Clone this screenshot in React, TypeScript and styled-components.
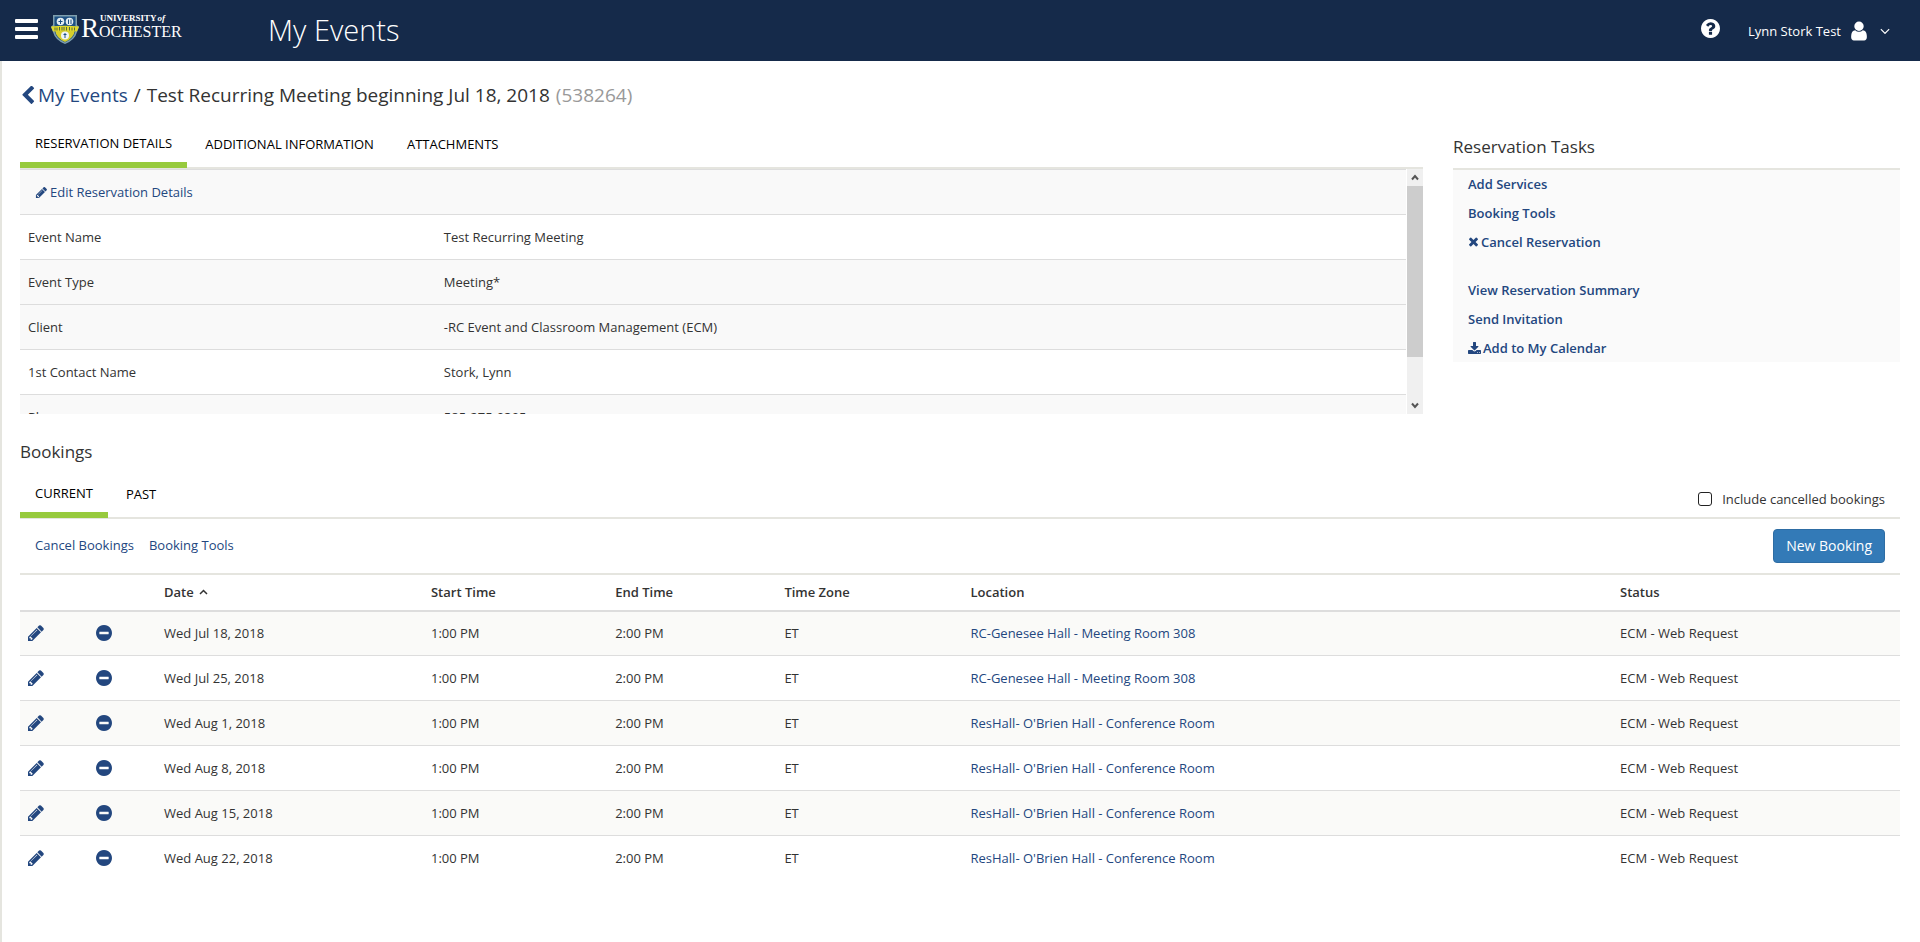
import React, { useRef } from "react";
import styled, { createGlobalStyle } from "styled-components";

const GlobalStyle = createGlobalStyle`
  *, *::before, *::after { box-sizing: border-box; }
  body {
    margin: 0;
    background: #fff;
    color: #333;
    font-family: "Open Sans", "Noto Sans", sans-serif;
    font-size: 13px;
    line-height: 20px;
  }
  button { font-family: inherit; }
`;

const navy = "#152a4a";
const linkBlue = "#23477f";
const rule = "#e5e5df";

const ICONS = {
  chevronLeft:
    "M1427 301l-531 531 531 531q19 19 19 45t-19 45l-166 166q-19 19-45 19t-45-19l-742-742q-19-19-19-45t19-45l742-742q19-19 45-19t45 19l166 166q19 19 19 45t-19 45z",
  question:
    "M1024 1376v-192q0-14-9-23t-23-9h-192q-14 0-23 9t-9 23v192q0 14 9 23t23 9h192q14 0 23-9t9-23zm256-672q0-88-55.5-163t-138.5-116-170-41q-243 0-371 213-15 24 8 42l132 100q7 6 19 6 16 0 25-12 53-68 86-92 34-24 86-24 48 0 85.5 26t37.5 59q0 38-20 61t-68 45q-63 28-115.5 86.5t-52.5 125.5v36q0 14 9 23t23 9h192q14 0 23-9t9-23q0-19 21.5-49.5t54.5-49.5q32-18 49-28.5t46-35 44.5-48 28-60.5 12.5-81zm384 192q0 209-103 385.5t-279.5 279.5-385.5 103-385.5-103-279.5-279.5-103-385.5 103-385.5 279.5-279.5 385.5-103 385.5 103 279.5 279.5 103 385.5z",
  user:
    "M1536 1399q0 109-62.5 187t-150.5 78h-854q-88 0-150.5-78t-62.5-187q0-85 8.5-160.5t31.5-152 58.5-131 94-89 134.5-34.5q131 128 313 128t313-128q76 0 134.5 34.5t94 89 58.5 131 31.5 152 8.5 160.5zm-256-887q0 159-112.5 271.5t-271.5 112.5-271.5-112.5-112.5-271.5 112.5-271.5 271.5-112.5 271.5 112.5 112.5 271.5z",
  angleDown:
    "M1395 736q0 13-10 23l-466 466q-10 10-23 10t-23-10l-466-466q-10-10-10-23t10-23l50-50q10-10 23-10t23 10l393 393 393-393q10-10 23-10t23 10l50 50q10 10 10 23z",
  pencil:
    "M491 1536l91-91-235-235-91 91v107h128v128h107zm523-928q0-22-22-22-10 0-17 7l-542 542q-7 7-7 17 0 22 22 22 10 0 17-7l542-542q7-7 7-17zm-54-192l416 416-832 832h-416v-416zm683 96q0 53-37 90l-166 166-416-416 166-165q36-38 90-38 53 0 91 38l235 234q37 39 37 91z",
  minusCircle:
    "M1344 960v-128q0-26-19-45t-45-19h-768q-26 0-45 19t-19 45v128q0 26 19 45t45 19h768q26 0 45-19t19-45zm320-64q0 209-103 385.5t-279.5 279.5-385.5 103-385.5-103-279.5-279.5-103-385.5 103-385.5 279.5-279.5 385.5-103 385.5 103 279.5 279.5 103 385.5z",
  times:
    "M1490 1322q0 40-28 68l-136 136q-28 28-68 28t-68-28l-294-294-294 294q-28 28-68 28t-68-28l-136-136q-28-28-28-68t28-68l294-294-294-294q-28-28-28-68t28-68l136-136q28-28 68-28t68 28l294 294 294-294q28-28 68-28t68 28l136 136q28 28 28 68t-28 68l-294 294 294 294q28 28 28 68z",
  download:
    "M1344 1344q0-26-19-45t-45-19-45 19-19 45 19 45 45 19 45-19 19-45zm256 0q0-26-19-45t-45-19-45 19-19 45 19 45 45 19 45-19 19-45zm128-224v320q0 40-28 68t-68 28h-1472q-40 0-68-28t-28-68v-320q0-40 28-68t68-28h465l135 136q58 56 136 56t136-56l136-136h464q40 0 68 28t28 68zm-325-569q17 41-14 70l-448 448q-18 19-45 19t-45-19l-448-448q-31-29-14-70 17-39 59-39h256v-448q0-26 19-45t45-19h256q26 0 45 19t19 45v448h256q42 0 59 39z",
};

type IconName = keyof typeof ICONS;

const IconSvg = styled.svg<{ $size: number }>`
  flex: none;
  display: block;
  width: ${(p) => p.$size}px;
  height: ${(p) => p.$size}px;
  fill: currentColor;
`;

const Icon = ({ name, size, box = "0 0 1792 1792" }: { name: IconName; size: number; box?: string }) => (
  <IconSvg $size={size} viewBox={box} aria-hidden="true">
    <path d={ICONS[name]} />
  </IconSvg>
);

/* ---------- Header ---------- */

const Header = styled.header`
  display: flex;
  align-items: center;
  height: 61px;
  padding: 0 27px 0 15px;
  background: ${navy};
  color: #fff;
`;

const Brand = styled.div`
  display: flex;
  align-items: center;
  gap: 13px;
  flex: 0 0 253px;
  height: 61px;
  padding-bottom: 4px;
`;

const MenuButton = styled.button`
  display: flex;
  flex-direction: column;
  gap: 4px;
  width: 23px;
  padding: 0;
  border: 0;
  background: none;
`;

const MenuBar = styled.span`
  height: 4px;
  border-radius: 1px;
  background: #fff;
`;

const HeaderTitle = styled.h1`
  flex: 1;
  margin: 0;
  padding-bottom: 2px;
  font-size: 29px;
  line-height: 40px;
  font-weight: 300;
`;

const IconButton = styled.button`
  padding: 0;
  border: 0;
  background: none;
  color: inherit;
`;

const HelpButton = styled(IconButton)`
  margin: 0 28px 4px 0;
`;

const UserButton = styled(IconButton)`
  display: flex;
  align-items: center;
  gap: 7px;
  font-size: 13px;
  line-height: 20px;
`;

const Logo = () => (
  <svg width="136" height="36" viewBox="0 0 136 36" role="img" aria-label="University of Rochester">
    <g transform="translate(0 4)">
      <path d="M2 0h24v10l2 2-2 5q-2 8-12 12Q4 25 2 17L0 12l2-2z" fill="#7f9fae" />
      <path d="M3.500 1.500h21V16q-1.500 8-10.500 11.500Q5 24 3.500 16z" fill="#1d5083" />
      <path d="M4 15h20q-1 8-10 12Q5 23 4 15z" fill="#d6cf2c" />
      <circle cx="9.500" cy="6.500" r="3.800" fill="#e4edf2" />
      <circle cx="18.500" cy="6.500" r="3.800" fill="#e4edf2" />
      <path d="M7.500 6.500h4M9.500 4.500v4.500M17.500 4.500v4.500M20 4.500v4.500" stroke="#1d5083" />
      <path d="M0 11.500q14-1.500 28 0l-2 5q-12-1.500-24 0z" fill="#e0d92a" />
      <path d="M4 12.500v3M6 12.500v3M8.500 12v3.500M11 12v3.500M13 12v3.500M15.500 12v3.500M18.500 12v3.500M21 12.500v3M23.500 12.500v3" stroke="#55683f" />
      <circle cx="14" cy="20.500" r="4" fill="#eef4f6" />
      <path d="M14 18v5M12.500 19.500h3" stroke="#1d5083" />
    </g>
    <text x="30" y="26" fill="#fff" fontFamily="'Liberation Serif', serif" fontSize="27">
      R<tspan fontSize="16">OCHESTER</tspan>
    </text>
    <text x="49" y="10" fill="#fff" fontFamily="'Liberation Serif', serif" fontSize="9" fontWeight="700">
      UNIVERSITY<tspan fontStyle="italic" dx="1">of</tspan>
    </text>
  </svg>
);

/* ---------- Page ---------- */

const Page = styled.main`
  min-height: calc(100vh - 61px);
  padding: 20px 20px 0 18px;
  border-left: 2px solid ${rule};
`;

const Breadcrumb = styled.h2`
  display: flex;
  align-items: center;
  margin: 0;
  gap: 6px;
  font-size: 19px;
  line-height: 28px;
  font-weight: 400;
`;

const Link = styled.a`
  color: ${linkBlue};
  text-decoration: none;
`;

const BackLink = styled(Link)`
  display: flex;
  align-items: center;
`;

const ReservationId = styled.span`
  color: #999;
`;

const TopRow = styled.div`
  display: grid;
  grid-template-columns: minmax(0, 1403fr) minmax(0, 447fr);
  column-gap: 30px;
  align-items: start;
  margin-top: 15px;
`;

const TabBar = styled.div`
  display: flex;
  align-items: flex-end;
  height: 45px;
  border-bottom: 2px solid ${rule};
`;

const Tab = styled.button<{ $active?: boolean }>`
  height: ${(p) => (p.$active ? 44 : 43)}px;
  margin: ${(p) => (p.$active ? "0 3px -1px 0" : "0 3px 0 0")};
  padding: ${(p) => (p.$active ? "0 15px" : "0 15px 3px")};
  border: 0;
  border-bottom: ${(p) => (p.$active ? "6px solid #97ca3d" : "0")};
  background: none;
  color: #000;
  font-size: 13px;
  line-height: 20px;
  text-transform: uppercase;
`;

const DetailsPane = styled.div`
  display: flex;
  gap: 1px;
  height: 245px;
`;

const DetailsScroll = styled.div`
  flex: 1;
  overflow: hidden;
`;

const EditBar = styled.div`
  height: 45px;
  padding: 12px 15px;
  border-top: 1px solid #ddd;
  background: #f9f9f9;
`;

const EditLink = styled(Link)`
  display: inline-flex;
  align-items: center;
  gap: 2px;
`;

const DetailsTable = styled.table`
  width: 100%;
  border-collapse: collapse;
  table-layout: fixed;
`;

const DetailRow = styled.tr<{ $shaded: boolean }>`
  background: ${(p) => (p.$shaded ? "#f9f9f9" : "#fff")};
`;

const DetailLabel = styled.th`
  width: 30%;
  height: 45px;
  padding: 0 8px;
  border-top: 1px solid #ddd;
  font-weight: 400;
  text-align: left;
`;

const DetailValue = styled.td`
  padding: 0 8px;
  border-top: 1px solid #ddd;
`;

const Scrollbar = styled.div`
  display: flex;
  flex-direction: column;
  width: 16px;
  background: #f0f0f0;
`;

const ScrollArrow = styled.button`
  display: flex;
  align-items: center;
  justify-content: center;
  height: 17px;
  padding: 0;
  border: 0;
  background: none;
  color: #555;
`;

const ScrollTrack = styled.div`
  flex: 1;
`;

const ScrollThumb = styled.div`
  height: 81%;
  background: #cdcdcd;
`;

const Arrow = ({ up }: { up?: boolean }) => (
  <svg width="8" height="7" viewBox="0 0 8 7" fill="none" stroke="currentColor" strokeWidth="2" aria-hidden="true">
    <path d={up ? "M1 5.500L4 2l3 3.500" : "M1 1.500L4 5l3-3.500"} />
  </svg>
);

const SectionTitle = styled.h3`
  margin: 0;
  font-size: 17px;
  line-height: 24px;
  font-weight: 400;
`;

const TasksTitle = styled(SectionTitle)`
  padding: 11px 0 9px;
  border-bottom: 2px solid ${rule};
`;

const TaskList = styled.ul`
  margin: 0;
  padding: 0 15px;
  background: #fafafa;
  list-style: none;
`;

const Task = styled.li<{ $gap?: boolean }>`
  display: flex;
  align-items: flex-start;
  height: 29px;
  margin-top: ${(p) => (p.$gap ? 20 : 0)}px;
  padding-top: 4px;
  &:nth-child(3n) { height: 28px; }
`;

const TaskLink = styled(Link)`
  display: flex;
  align-items: center;
  gap: 2px;
  font-weight: 600;
`;

/* ---------- Bookings ---------- */

const Bookings = styled.section`
  margin-top: 26px;
`;

const BookingTabs = styled.div`
  display: flex;
  align-items: flex-end;
  justify-content: space-between;
  height: 55px;
  border-bottom: 2px solid ${rule};
`;

const TabGroup = styled.div`
  display: flex;
  align-items: flex-end;
`;

const CheckLabel = styled.label`
  display: flex;
  align-items: center;
  gap: 10px;
  padding: 0 15px 8px;
`;

const Checkbox = styled.input`
  appearance: none;
  width: 14px;
  height: 14px;
  margin: 0;
  border: 1px solid #222;
  border-radius: 3px;
  background: #fff;
`;

const ActionBar = styled.div`
  display: flex;
  align-items: center;
  height: 56px;
  padding: 0 15px;
  border-bottom: 2px solid ${rule};
`;

const ActionLinks = styled.nav`
  display: flex;
  gap: 15px;
  padding-bottom: 2px;
`;

const NewBookingButton = styled.button`
  height: 34px;
  margin-left: auto;
  padding: 0 12px;
  border: 1px solid #2e6da4;
  border-radius: 4px;
  background: #337ab7;
  color: #fff;
  font-size: 14px;
  line-height: 20px;
`;

const BookingTable = styled.table`
  width: 100%;
  border-collapse: separate;
  border-spacing: 0;
  table-layout: fixed;
`;

const Col = styled.col<{ $width?: string }>`
  width: ${(p) => p.$width ?? "auto"};
`;

const HeadCell = styled.th`
  height: 37px;
  padding: 0 8px 2px;
  border-bottom: 2px solid #ddd;
  font-weight: 600;
  text-align: left;
`;

const SortButton = styled.button`
  display: flex;
  align-items: center;
  gap: 5px;
  padding: 0;
  border: 0;
  background: none;
  color: inherit;
  font-size: 13px;
  line-height: 20px;
  font-weight: 600;
`;

const BookingRow = styled.tr`
  &:nth-child(odd) { background: #fafaf8; }
`;

const Cell = styled.td`
  height: 45px;
  padding: 0 8px;
  border-bottom: 1px solid #ddd;
  ${BookingRow}:first-child & { height: 44px; padding-bottom: 1px; }
  ${BookingRow}:last-child & { border-bottom: 0; padding-bottom: 1px; }
`;

const RowButton = styled(IconButton)`
  display: block;
  color: ${linkBlue};
`;

const details: [string, string][] = [
  ["Event Name", "Test Recurring Meeting"],
  ["Event Type", "Meeting*"],
  ["Client", "-RC Event and Classroom Management (ECM)"],
  ["1st Contact Name", "Stork, Lynn"],
  ["Phone", "585-275-0305"],
];

const shadedDetails = [false, true, true, false, true];

const genesee = "RC-Genesee Hall - Meeting Room 308";
const obrien = "ResHall- O'Brien Hall - Conference Room";

const bookings = [
  { date: "Wed Jul 18, 2018", location: genesee },
  { date: "Wed Jul 25, 2018", location: genesee },
  { date: "Wed Aug 1, 2018", location: obrien },
  { date: "Wed Aug 8, 2018", location: obrien },
  { date: "Wed Aug 15, 2018", location: obrien },
  { date: "Wed Aug 22, 2018", location: obrien },
];

const tasks: { label: string; icon?: IconName; gap?: boolean; size?: number; box?: string }[] = [
  { label: "Add Services" },
  { label: "Booking Tools" },
  { label: "Cancel Reservation", icon: "times", size: 11, box: "240 300 1312 1456" },
  { label: "View Reservation Summary", gap: true },
  { label: "Send Invitation" },
  { label: "Add to My Calendar", icon: "download", size: 13, box: "64 0 1664 1664" },
];

export default function App() {
  const scroller = useRef<HTMLDivElement>(null);
  const scrollBy = (top: number) => scroller.current?.scrollBy({ top });

  return (
    <>
      <GlobalStyle />
      <Header>
        <Brand>
          <MenuButton aria-label="Menu">
            <MenuBar />
            <MenuBar />
            <MenuBar />
          </MenuButton>
          <Logo />
        </Brand>
        <HeaderTitle>My Events</HeaderTitle>
        <HelpButton aria-label="Help">
          <Icon name="question" size={19} box="128 128 1536 1536" />
        </HelpButton>
        <UserButton>
          Lynn Stork Test
          <Icon name="user" size={22} />
          <Icon name="angleDown" size={16} />
        </UserButton>
      </Header>

      <Page>
        <Breadcrumb>
          <BackLink href="#events">
            <Icon name="chevronLeft" size={18} box="200 50 1592 1592" />
            My Events
          </BackLink>
          <span>/</span>
          <span>Test Recurring Meeting beginning Jul 18, 2018</span>
          <ReservationId>(538264)</ReservationId>
        </Breadcrumb>

        <TopRow>
          <section>
            <TabBar role="tablist">
              <Tab role="tab" aria-selected="true" $active>Reservation Details</Tab>
              <Tab role="tab">Additional Information</Tab>
              <Tab role="tab">Attachments</Tab>
            </TabBar>
            <DetailsPane>
              <DetailsScroll ref={scroller}>
                <EditBar>
                  <EditLink href="#edit">
                    <Icon name="pencil" size={13} />
                    Edit Reservation Details
                  </EditLink>
                </EditBar>
                <DetailsTable>
                  <tbody>
                    {details.map(([label, value], i) => (
                      <DetailRow key={label} $shaded={shadedDetails[i]}>
                        <DetailLabel scope="row">{label}</DetailLabel>
                        <DetailValue>{value}</DetailValue>
                      </DetailRow>
                    ))}
                  </tbody>
                </DetailsTable>
              </DetailsScroll>
              <Scrollbar>
                <ScrollArrow aria-label="Scroll up" onClick={() => scrollBy(-45)}><Arrow up /></ScrollArrow>
                <ScrollTrack><ScrollThumb /></ScrollTrack>
                <ScrollArrow aria-label="Scroll down" onClick={() => scrollBy(45)}><Arrow /></ScrollArrow>
              </Scrollbar>
            </DetailsPane>
          </section>

          <aside>
            <TasksTitle>Reservation Tasks</TasksTitle>
            <TaskList>
              {tasks.map((t) => (
                <Task key={t.label} $gap={t.gap}>
                  <TaskLink href="#task">
                    {t.icon && <Icon name={t.icon} size={t.size ?? 13} box={t.box} />}
                    {t.label}
                  </TaskLink>
                </Task>
              ))}
            </TaskList>
          </aside>
        </TopRow>

        <Bookings>
          <SectionTitle>Bookings</SectionTitle>
          <BookingTabs>
            <TabGroup role="tablist">
              <Tab role="tab" aria-selected="true" $active>Current</Tab>
              <Tab role="tab">Past</Tab>
            </TabGroup>
            <CheckLabel>
              <Checkbox type="checkbox" />
              Include cancelled bookings
            </CheckLabel>
          </BookingTabs>
          <ActionBar>
            <ActionLinks>
              <Link href="#cancel">Cancel Bookings</Link>
              <Link href="#tools">Booking Tools</Link>
            </ActionLinks>
            <NewBookingButton>New Booking</NewBookingButton>
          </ActionBar>
          <BookingTable>
            <colgroup>
              <Col $width="68px" />
              <Col $width="68px" />
              <Col $width="14.2%" />
              <Col $width="9.8%" />
              <Col $width="9%" />
              <Col $width="9.9%" />
              <Col $width="34.55%" />
              <Col />
            </colgroup>
            <thead>
              <tr>
                <HeadCell />
                <HeadCell />
                <HeadCell aria-sort="ascending">
                  <SortButton>
                    Date
                    <svg width="9" height="6" viewBox="0 0 9 6" fill="none" stroke="currentColor" strokeWidth="1.500" aria-hidden="true">
                      <path d="M1 5l3.500-3.500L8 5" />
                    </svg>
                  </SortButton>
                </HeadCell>
                <HeadCell>Start Time</HeadCell>
                <HeadCell>End Time</HeadCell>
                <HeadCell>Time Zone</HeadCell>
                <HeadCell>Location</HeadCell>
                <HeadCell>Status</HeadCell>
              </tr>
            </thead>
            <tbody>
              {bookings.map((b) => (
                <BookingRow key={b.date}>
                  <Cell>
                    <RowButton aria-label={`Edit ${b.date}`}>
                      <Icon name="pencil" size={16} box="128 128 1536 1536" />
                    </RowButton>
                  </Cell>
                  <Cell>
                    <RowButton aria-label={`Cancel ${b.date}`}>
                      <Icon name="minusCircle" size={16} box="128 128 1536 1536" />
                    </RowButton>
                  </Cell>
                  <Cell>{b.date}</Cell>
                  <Cell>1:00 PM</Cell>
                  <Cell>2:00 PM</Cell>
                  <Cell>ET</Cell>
                  <Cell><Link href="#location">{b.location}</Link></Cell>
                  <Cell>ECM - Web Request</Cell>
                </BookingRow>
              ))}
            </tbody>
          </BookingTable>
        </Bookings>
      </Page>
    </>
  );
}
